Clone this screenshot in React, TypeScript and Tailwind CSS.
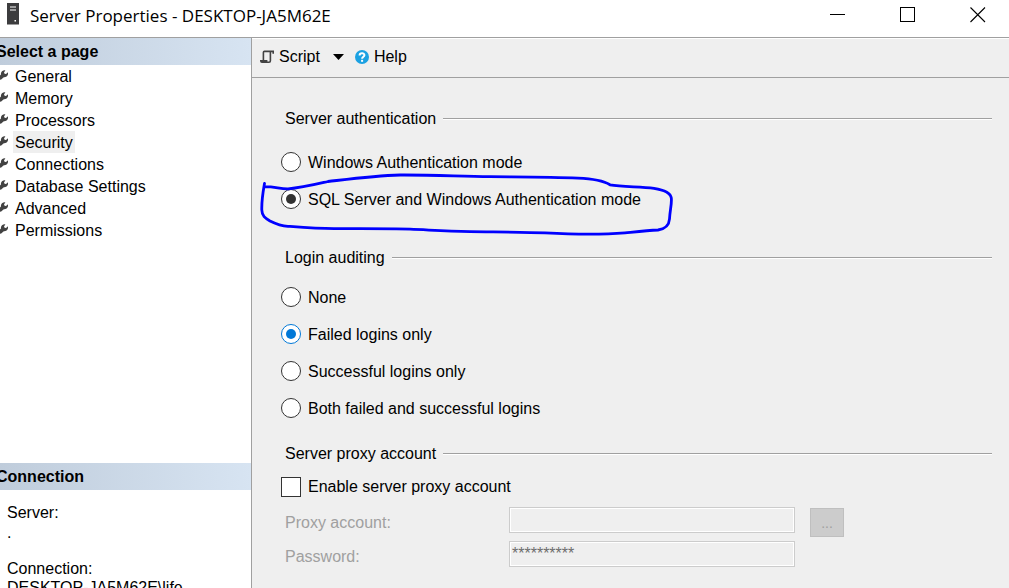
import type { ReactNode } from "react";

const pages = [
  "General",
  "Memory",
  "Processors",
  "Security",
  "Connections",
  "Database Settings",
  "Advanced",
  "Permissions",
];

function ServerIcon() {
  return (
    <svg className="h-[22px] w-3 shrink-0" viewBox="0 0 12 22" aria-hidden="true">
      <rect width="12" height="21.5" fill="#3c3c3e" />
      <path d="M3 4h6M3 7h6" stroke="#fff" strokeWidth="1.2" />
      <rect x="7.5" y="17" width="1.5" height="1.5" fill="#fff" />
    </svg>
  );
}

function WrenchIcon() {
  return (
    <svg className="h-3 w-2 shrink-0" viewBox="0 0 8 12" aria-hidden="true">
      <path
        d="M0 6.6 1 5.6C.4 3.2 2.4 1 5.4 1.3L4 3.4l.6 1.4 1.4.2L8 3.2C8.6 6 6.6 8.4 3.8 8.2L1.2 10.4 0 10.8z"
        fill="#424242"
      />
    </svg>
  );
}

function ScriptIcon() {
  return (
    <svg className="h-[14px] w-[14px] shrink-0" viewBox="0 0 14 14" aria-hidden="true">
      <path
        d="M3.4 10V2.4Q3.4 1.4 4.4 1.4H13.2V3.8M10.4 1.4V10.8Q10.4 12.2 9 12.2H2Q.8 12.2.8 10.9H7.4"
        fill="none"
        stroke="#424242"
        strokeWidth="1.6"
      />
    </svg>
  );
}

function HelpIcon() {
  return (
    <svg className="size-[14px] shrink-0" viewBox="0 0 14 14" aria-hidden="true">
      <circle cx="7" cy="7" r="7" fill="#1ba1e2" />
      <path
        d="M4.6 5.4C4.6 2.6 9.5 2.6 9.4 5.2C9.3 6.8 7.1 6.7 7.1 8.8"
        fill="none"
        stroke="#fff"
        strokeWidth="2"
      />
      <rect x="6.1" y="9.8" width="2" height="2" fill="#fff" />
    </svg>
  );
}

function PanelHeading({ children }: { children: ReactNode }) {
  return (
    <h2 className="-ml-1 h-[27px] bg-linear-to-r from-[#bfccdb] to-[#d7e4f2] text-base leading-[27px] font-bold">
      {children}
    </h2>
  );
}

function GroupTitle({ children }: { children: ReactNode }) {
  return (
    <h3 className="flex h-[22px] items-center gap-[7px] pl-1 leading-[22px]">
      {children}
      <span className="h-[2px] flex-1 border-t border-[#a0a0a0] bg-white" />
    </h3>
  );
}

function Option({
  name,
  label,
  checked = false,
  accent = false,
  children,
}: {
  name: string;
  label: string;
  checked?: boolean;
  accent?: boolean;
  children?: ReactNode;
}) {
  return (
    <div className="relative flex h-[22px]">
      <label className="flex items-start gap-[7px] leading-[22px]">
        <input
          type="radio"
          name={name}
          defaultChecked={checked}
          className={
            "grid size-5 appearance-none place-content-center rounded-full border bg-white checked:before:size-[10px] checked:before:rounded-full " +
            (accent
              ? "border-[#0078d7] before:bg-[#0078d7]"
              : "border-[#333333] before:bg-[#333333]")
          }
        />
        {label}
      </label>
      {children}
    </div>
  );
}

function InkLoop() {
  return (
    <svg
      className="pointer-events-none absolute -top-[17px] -left-[23px] h-[66px] w-[418px] max-w-none"
      viewBox="258 172 418 66"
      aria-hidden="true"
    >
      <path
        d="M264.5 183.5C263 192 261.5 200 261.8 210C262 216 265 218 270 221C276 224 281 226 288 226.3C304 227.5 318 228.6 334 228.7C360 228.8 390 228.5 410 229.2C430 230 445 231.2 470 231.6C500 232 525 232 545 232.9C575 234.5 605 234.6 625 232.8C640 231.4 648 230.6 658 230C665 229 669 226 669.5 219C670 210 672 203 671.3 198C670.5 192 662 189.5 654 188.3C640 186.5 622 187 610 184.8C603 180.5 592 178.8 578 178.2C550 176.8 520 177 490 176.7C460 176.5 436 174.8 400 175C375 175.8 350 179 328 181.5C315 184.5 302 187.8 288 188.8C280 189 275 186.5 264.5 186.6"
        fill="none"
        stroke="#0000ff"
        strokeWidth="2.8"
        strokeLinecap="round"
        strokeLinejoin="round"
      />
    </svg>
  );
}

export default function App() {
  return (
    <div className="flex h-screen flex-col overflow-hidden bg-[#efefef] font-['Liberation_Sans',Arial,sans-serif] text-base text-black">
      <header className="flex h-[38px] shrink-0 items-start border-b border-[#a0a0a0] bg-white pt-[3px] pr-[23px] pl-[7px]">
        <ServerIcon />
        <h1 className="ml-[11px] flex-1 font-['Open_Sans','Noto_Sans',sans-serif] text-[17px] leading-[26px] whitespace-nowrap">
          Server Properties - DESKTOP-JA5M62E
        </h1>
        <div className="flex h-6 items-center gap-[54px]">
          <button type="button" aria-label="Minimize">
            <svg className="size-4" viewBox="0 0 16 16" shapeRendering="crispEdges">
              <path d="M0 7.5h15" stroke="#000" />
            </svg>
          </button>
          <button type="button" aria-label="Maximize">
            <svg className="size-4" viewBox="0 0 16 16" shapeRendering="crispEdges">
              <path d="M.5.5h14v14H.5z" fill="none" stroke="#000" />
            </svg>
          </button>
          <button type="button" aria-label="Close">
            <svg className="size-4" viewBox="0 0 16 16">
              <path d="m.5.5 14.5 14.5m0-14.5-14.5 14.5" stroke="#000" strokeWidth="1.1" />
            </svg>
          </button>
        </div>
      </header>

      <div className="flex min-h-0 flex-1">
        <aside className="flex w-[252px] shrink-0 flex-col overflow-hidden border-r border-[#a0a0a0] bg-white">
          <nav className="flex-1">
            <PanelHeading>Select a page</PanelHeading>
            <ul>
              {pages.map((page) => (
                <li key={page} className="flex h-[22px] items-start gap-[5px]">
                  <span className="flex h-5 items-center">
                    <WrenchIcon />
                  </span>
                  <a
                    href="#"
                    className={
                      page === "Security"
                        ? "h-[22px] bg-[#efefef] px-[2px] leading-6"
                        : "h-[22px] px-[2px] leading-6"
                    }
                  >
                    {page}
                  </a>
                </li>
              ))}
            </ul>
          </nav>
          <section className="h-[125px] shrink-0 overflow-hidden">
            <PanelHeading>Connection</PanelHeading>
            <dl className="pt-[13px] pl-[7px] leading-5">
              <dt>Server:</dt>
              <dd>.</dd>
              <dt className="mt-4">Connection:</dt>
              <dd className="-mt-px">DESKTOP-JA5M62E\life</dd>
            </dl>
          </section>
        </aside>

        <main className="min-w-0 flex-1 overflow-hidden">
          <div className="flex h-10 items-center border-t border-b border-t-white border-b-[#a0a0a0] pr-2 pb-[2px] pl-2">
            <button type="button" className="flex items-center gap-[5px]">
              <ScriptIcon />
              Script
              <svg className="ml-2 h-[6px] w-[11px]" viewBox="0 0 11 6" aria-hidden="true">
                <path d="M0 0h11L5.5 6z" />
              </svg>
            </button>
            <button type="button" className="ml-[11px] flex items-center gap-[5px]">
              <HelpIcon />
              Help
            </button>
          </div>

          <form className="pt-[30px] pr-[17px] pl-[29px]">
            <section>
              <GroupTitle>Server authentication</GroupTitle>
              <div className="mt-[22px] flex flex-col gap-[15px]">
                <Option name="auth" label="Windows Authentication mode" />
                <Option name="auth" label="SQL Server and Windows Authentication mode" checked>
                  <InkLoop />
                </Option>
              </div>
            </section>

            <section className="mt-9">
              <GroupTitle>Login auditing</GroupTitle>
              <div className="mt-[18px] flex flex-col gap-[15px]">
                <Option name="audit" label="None" />
                <Option name="audit" label="Failed logins only" checked accent />
                <Option name="audit" label="Successful logins only" />
                <Option name="audit" label="Both failed and successful logins" />
              </div>
            </section>

            <section className="mt-[23px]">
              <GroupTitle>Server proxy account</GroupTitle>
              <label className="mt-3 flex h-5 items-center gap-[7px] leading-5">
                <input
                  type="checkbox"
                  className="size-5 appearance-none border border-[#333333] bg-white checked:bg-[#333333]"
                />
                Enable server proxy account
              </label>
              <div className="mt-[10px] flex h-[30px] items-start pl-1">
                <label htmlFor="proxy" className="w-56 pt-[6px] leading-5 text-[#a0a0a0]">
                  Proxy account:
                </label>
                <input
                  id="proxy"
                  type="text"
                  disabled
                  className="h-[26px] w-[286px] border border-[#cccccc] bg-[#efefef] px-[2px] inset-ring-1 inset-ring-white"
                />
                <button
                  type="button"
                  disabled
                  className="mt-px ml-[15px] h-[29px] w-[34px] border border-[#bfbfbf] bg-[#cccccc] text-sm text-[#a0a0a0]"
                >
                  ...
                </button>
              </div>
              <div className="mt-1 flex h-[26px] items-start pl-1">
                <label htmlFor="password" className="w-56 pt-[6px] leading-5 text-[#a0a0a0]">
                  Password:
                </label>
                <input
                  id="password"
                  type="text"
                  disabled
                  defaultValue="**********"
                  className="h-[26px] w-[286px] border border-[#cccccc] bg-[#efefef] px-[2px] text-[#6d6d6d] inset-ring-1 inset-ring-white"
                />
              </div>
            </section>
          </form>
        </main>
      </div>
    </div>
  );
}
